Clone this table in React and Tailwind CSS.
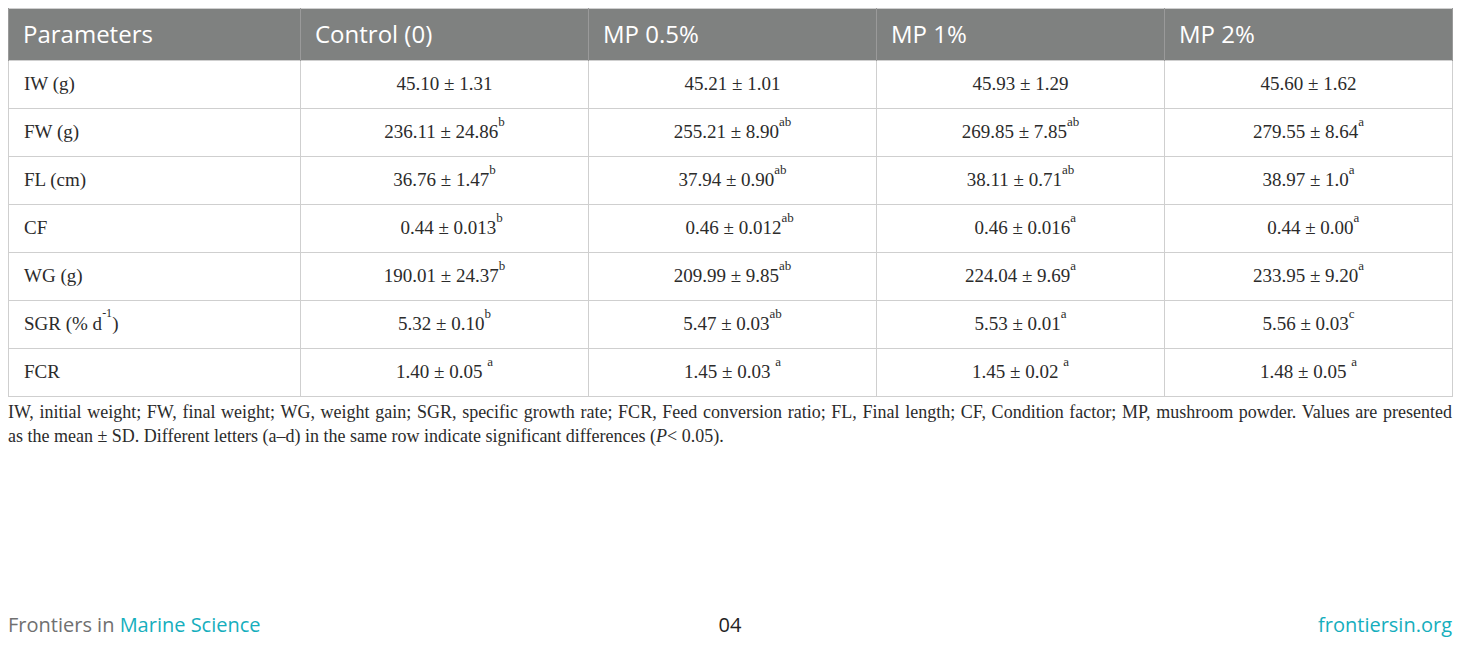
const headers = ["Parameters", "Control (0)", "MP 0.5%", "MP 1%", "MP 2%"];

const rows = [
  { label: "IW (g)", cells: [["45.10 ± 1.31"], ["45.21 ± 1.01"], ["45.93 ± 1.29"], ["45.60 ± 1.62"]] },
  { label: "FW (g)", cells: [["236.11 ± 24.86", "b"], ["255.21 ± 8.90", "ab"], ["269.85 ± 7.85", "ab"], ["279.55 ± 8.64", "a"]] },
  { label: "FL (cm)", cells: [["36.76 ± 1.47", "b"], ["37.94 ± 0.90", "ab"], ["38.11 ± 0.71", "ab"], ["38.97 ± 1.0", "a"]] },
  { label: "CF", cells: [["\u00a0\u00a0\u00a00.44 ± 0.013", "b"], ["\u00a0\u00a0\u00a00.46 ± 0.012", "ab"], ["\u00a0\u00a00.46 ± 0.016", "a"], ["\u00a0\u00a00.44 ± 0.00", "a"]] },
  { label: "WG (g)", cells: [["190.01 ± 24.37", "b"], ["209.99 ± 9.85", "ab"], ["224.04 ± 9.69", "a"], ["233.95 ± 9.20", "a"]] },
  { label: "SGR", cells: [["5.32 ± 0.10", "b"], ["5.47 ± 0.03", "ab"], ["5.53 ± 0.01", "a"], ["5.56 ± 0.03", "c"]] },
  { label: "FCR", cells: [["1.40 ± 0.05 ", "a"], ["1.45 ± 0.03 ", "a"], ["1.45 ± 0.02 ", "a"], ["1.48 ± 0.05 ", "a"]] },
];

export default function App() {
  return (
    <div className="w-[1460px] h-[645px] bg-white flex flex-col px-2 pt-2 overflow-hidden">
      <table className="w-full border-collapse table-fixed border border-[#cfcfcf]">
        <colgroup>
          <col className="w-[292px]" />
          <col className="w-[288px]" />
          <col className="w-[288px]" />
          <col className="w-[288px]" />
          <col className="w-[288px]" />
        </colgroup>
        <thead>
          <tr className="bg-[#7f8180] h-[52px]">
            {headers.map((h) => (
              <th
                key={h}
                className="text-left font-normal text-white text-[24px] pl-[14px] pb-[2px] border-x border-[#9a9a9a] font-['Open_Sans',sans-serif]"
              >
                {h}
              </th>
            ))}
          </tr>
        </thead>
        <tbody className="font-['Liberation_Serif',serif] text-[19px] text-[#2b2b2b]">
          {rows.map((r) => (
            <tr key={r.label} className="h-[48px] border-t border-[#cfcfcf]">
              <td className="pl-[15px] border-r border-[#cfcfcf]">
                {r.label === "SGR" ? (
                  <>
                    SGR (% d<sup className="text-[12px] align-[7px]">-1</sup>)
                  </>
                ) : (
                  r.label
                )}
              </td>
              {r.cells.map(([v, s], i) => (
                <td key={i} className="text-center border-r border-[#cfcfcf] whitespace-pre">
                  {v}
                  {s && <sup className="text-[13px] align-[6px]">{s}</sup>}
                </td>
              ))}
            </tr>
          ))}
        </tbody>
      </table>
      <div className="mt-[3px] font-['Liberation_Serif',serif] text-[18px] leading-[24px] text-[#2b2b2b]">
        <p className="text-justify [text-align-last:justify]">
          IW, initial weight; FW, final weight; WG, weight gain; SGR, specific growth rate; FCR, Feed conversion ratio; FL, Final length; CF, Condition factor; MP, mushroom powder. Values are presented
        </p>
        <p>
          as the mean ± SD. Different letters (a–d) in the same row indicate significant differences (<i>P</i>&lt; 0.05).
        </p>
      </div>
      <div className="mt-auto mb-[5px] flex items-center justify-between font-['Open_Sans',sans-serif] text-[20px]">
        <div className="w-[300px]">
          <span className="text-[#707070]">Frontiers in </span>
          <span className="text-[#15aebd]">Marine Science</span>
        </div>
        <div className="text-[#222]">04</div>
        <div className="w-[300px] text-right text-[#15aebd]">frontiersin.org</div>
      </div>
    </div>
  );
}
